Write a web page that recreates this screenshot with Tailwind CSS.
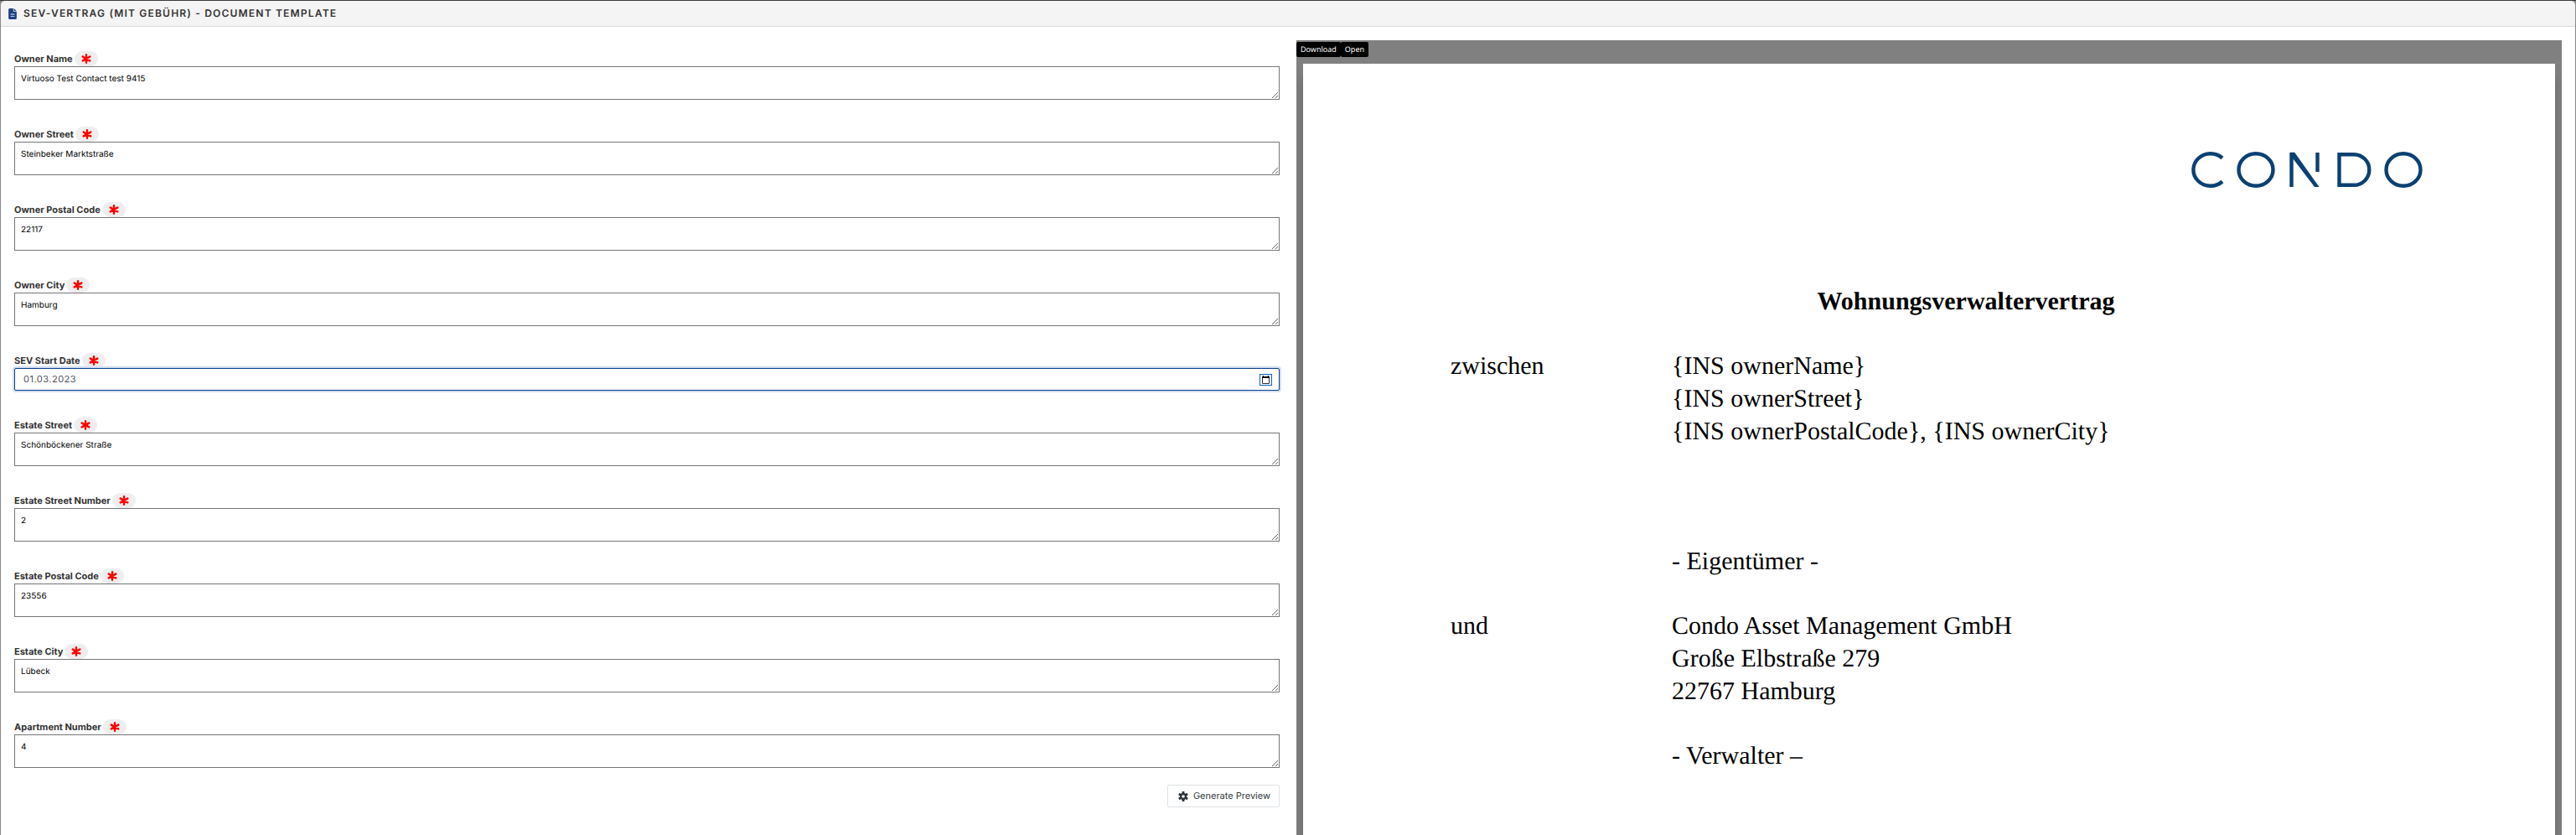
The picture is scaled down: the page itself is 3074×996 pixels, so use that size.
<!DOCTYPE html>
<html lang="en">
<head>
<meta charset="utf-8">
<title>SEV-Vertrag (mit Gebühr) - Document Template</title>
<script src="https://cdn.jsdelivr.net/npm/@tailwindcss/browser@4"></script>
</head>
<body class="bg-[#8a8a8a] font-['Inter',sans-serif] text-[11px] text-[#333] [text-rendering:geometricPrecision]">
<svg class="hidden" aria-hidden="true">
  <symbol id="required" viewBox="0 0 12 12"><path d="M6 1.200v9.600M1.700 3.600l8.600 4.800M10.300 3.600L1.700 8.400" stroke="#f00" stroke-width="2.400" stroke-linecap="round" fill="none"/></symbol>
</svg>
<main class="flex h-screen flex-col overflow-hidden border-t border-[#3a3a3a] px-px">
  <header class="flex h-[31px] shrink-0 items-center gap-2 rounded-t-[5px] border-b border-[#d8d8d8] bg-[#f4f4f4] px-[9px]">
    <svg class="h-[13px] w-[10px]" viewBox="0 0 384 512" aria-hidden="true"><path fill="#1c4186" fill-rule="evenodd" d="M64 0C29 0 0 29 0 64v384c0 35 29 64 64 64h256c35 0 64-29 64-64V160H256c-18 0-32-14-32-32V0zM256 0v128h128zM112 256h160a16 16 0 0 1 0 36H112a16 16 0 0 1 0-36zm0 96h160a16 16 0 0 1 0 36H112a16 16 0 0 1 0-36z"/></svg>
    <h1 class="text-[12px] font-semibold tracking-widest uppercase">SEV-Vertrag (mit Gebühr) - Document Template</h1>
  </header>
  <div class="grid min-h-0 grow grid-cols-2 gap-5 bg-white px-4 pt-4">
    <form class="flex flex-col gap-8 pt-[13px]">
      <div class="flex flex-col">
        <label for="owner-name" class="flex items-center gap-[2px] font-bold">Owner Name <span class="flex h-[18px] w-7 items-center justify-center rounded-full bg-[#eee]"><svg class="size-3"><use href="#required"/></svg></span></label>
        <textarea id="owner-name" class="h-10 resize-y border border-[#767676] bg-white px-[7px] py-[6px] text-[10px] leading-4 text-black [text-rendering:inherit]">Virtuoso Test Contact test 9415</textarea>
      </div>
      <div class="flex flex-col">
        <label for="owner-street" class="flex items-center gap-[2px] font-bold">Owner Street <span class="flex h-[18px] w-7 items-center justify-center rounded-full bg-[#eee]"><svg class="size-3"><use href="#required"/></svg></span></label>
        <textarea id="owner-street" class="h-10 resize-y border border-[#767676] bg-white px-[7px] py-[6px] text-[10px] leading-4 text-black [text-rendering:inherit]">Steinbeker Marktstraße</textarea>
      </div>
      <div class="flex flex-col">
        <label for="owner-postal" class="flex items-center gap-[2px] font-bold">Owner Postal Code <span class="flex h-[18px] w-7 items-center justify-center rounded-full bg-[#eee]"><svg class="size-3"><use href="#required"/></svg></span></label>
        <textarea id="owner-postal" class="h-10 resize-y border border-[#767676] bg-white px-[7px] py-[6px] text-[10px] leading-4 text-black [text-rendering:inherit]">22117</textarea>
      </div>
      <div class="flex flex-col">
        <label for="owner-city" class="flex items-center gap-[2px] font-bold">Owner City <span class="flex h-[18px] w-7 items-center justify-center rounded-full bg-[#eee]"><svg class="size-3"><use href="#required"/></svg></span></label>
        <textarea id="owner-city" class="h-10 resize-y border border-[#767676] bg-white px-[7px] py-[6px] text-[10px] leading-4 text-black [text-rendering:inherit]">Hamburg</textarea>
      </div>
      <div class="flex flex-col">
        <label for="start-date" class="flex items-center gap-[2px] font-bold">SEV Start Date <span class="flex h-[18px] w-7 items-center justify-center rounded-full bg-[#eee]"><svg class="size-3"><use href="#required"/></svg></span></label>
        <div class="flex h-[27px] items-center rounded-[2px] border border-[#0b3f8f] bg-white pr-2 pl-[10px] shadow-[0_0_0_2px_#d3deee]">
          <input id="start-date" type="text" value="01.03.2023" class="min-w-0 grow tracking-[0.5px] text-[#495057] outline-none [text-rendering:inherit]">
          <button type="button" aria-label="Pick a date" class="flex h-[14px] w-[15px] items-center justify-center border border-[#0a5fca]"><svg class="h-[10px] w-[9px]" viewBox="0 0 9 10" aria-hidden="true"><path d="M.5 2.500v7h8v-7" fill="#fff" stroke="#333"/><path d="M0 1h1V0h1v1h5V0h1v1h1v2H0z" fill="#000"/></svg></button>
        </div>
      </div>
      <div class="flex flex-col">
        <label for="estate-street" class="flex items-center gap-[2px] font-bold">Estate Street <span class="flex h-[18px] w-7 items-center justify-center rounded-full bg-[#eee]"><svg class="size-3"><use href="#required"/></svg></span></label>
        <textarea id="estate-street" class="h-10 resize-y border border-[#767676] bg-white px-[7px] py-[6px] text-[10px] leading-4 text-black [text-rendering:inherit]">Schönböckener Straße</textarea>
      </div>
      <div class="flex flex-col">
        <label for="estate-number" class="flex items-center gap-[2px] font-bold">Estate Street Number <span class="flex h-[18px] w-7 items-center justify-center rounded-full bg-[#eee]"><svg class="size-3"><use href="#required"/></svg></span></label>
        <textarea id="estate-number" class="h-10 resize-y border border-[#767676] bg-white px-[7px] py-[6px] text-[10px] leading-4 text-black [text-rendering:inherit]">2</textarea>
      </div>
      <div class="flex flex-col">
        <label for="estate-postal" class="flex items-center gap-[2px] font-bold">Estate Postal Code <span class="flex h-[18px] w-7 items-center justify-center rounded-full bg-[#eee]"><svg class="size-3"><use href="#required"/></svg></span></label>
        <textarea id="estate-postal" class="h-10 resize-y border border-[#767676] bg-white px-[7px] py-[6px] text-[10px] leading-4 text-black [text-rendering:inherit]">23556</textarea>
      </div>
      <div class="flex flex-col">
        <label for="estate-city" class="flex items-center gap-[2px] font-bold">Estate City <span class="flex h-[18px] w-7 items-center justify-center rounded-full bg-[#eee]"><svg class="size-3"><use href="#required"/></svg></span></label>
        <textarea id="estate-city" class="h-10 resize-y border border-[#767676] bg-white px-[7px] py-[6px] text-[10px] leading-4 text-black [text-rendering:inherit]">Lübeck</textarea>
      </div>
      <div class="flex flex-col">
        <label for="apartment" class="flex items-center gap-[2px] font-bold">Apartment Number <span class="flex h-[18px] w-7 items-center justify-center rounded-full bg-[#eee]"><svg class="size-3"><use href="#required"/></svg></span></label>
        <textarea id="apartment" class="h-10 resize-y border border-[#767676] bg-white px-[7px] py-[6px] text-[10px] leading-4 text-black [text-rendering:inherit]">4</textarea>
        <button type="button" class="mt-5 flex h-[27px] items-center gap-[6px] self-end rounded-[2px] border border-[#dee2e6] bg-white pr-[10px] pl-3 text-[#343a40] [text-rendering:inherit]">
          <svg class="size-3" viewBox="0 0 12 12" aria-hidden="true"><g fill="none" stroke="#2f343a"><circle cx="6" cy="6" r="3" stroke-width="2.400"/><path d="M6 0v2.500M6 12V9.500M.8 3l2.200 1.250M11.200 9L9 7.750M11.200 3L9 4.250M.8 9L3 7.750" stroke-width="2.800"/></g></svg>
          Generate Preview
        </button>
      </div>
    </form>
    <section aria-label="Preview" class="flex min-h-0 flex-col overflow-hidden bg-[#808080]">
      <nav class="flex h-7 shrink-0 items-start pt-[2px] font-['Noto_Sans',sans-serif] text-[9px] leading-[18px] text-white">
        <a href="#download" class="rounded-[2px] bg-black px-[5px]">Download</a>
        <a href="#open" class="rounded-[2px] bg-black px-[5px]">Open</a>
      </nav>
      <article class="mx-2 flex grow flex-col bg-white pt-[105px] pr-[88px] pl-[176px] font-['Liberation_Serif',serif] text-[30px] leading-[39px] text-black shadow-[0_16px_12px_rgba(0,0,0,0.2)]">
        <svg class="mr-[70px] h-[43px] w-[276px] self-end" viewBox="0 0 276 43" role="img" aria-label="Condo" fill="none" stroke="#0b4073" stroke-width="4.400">
          <path d="M37 7.500A20.500 19.300 0 1 0 37 35.500"/>
          <ellipse cx="77" cy="21.500" rx="20.500" ry="19.300"/>
          <path d="M119.500 42V1M150.500 1v23"/>
          <path fill="#0b4073" stroke="none" d="M118 .7h5.200L152.500 42h-5.500L118 4z"/>
          <path d="M176.500 3.200H194a18.300 18.300 0 0 1 0 36.600h-17.500z"/>
          <ellipse cx="253" cy="21.500" rx="20.500" ry="19.300"/>
        </svg>
        <h2 class="mt-[116px] text-center font-bold">Wohnungsverwaltervertrag</h2>
        <div class="mt-[38px] flex"><p class="w-[264px] shrink-0">zwischen</p><p>{INS ownerName}<br>{INS ownerStreet}<br>{INS ownerPostalCode}, {INS ownerCity}</p></div>
        <p class="mt-[116px] ml-[264px]">- Eigentümer -</p>
        <div class="mt-[38px] flex"><p class="w-[264px] shrink-0">und</p><p>Condo Asset Management GmbH<br>Große Elbstraße 279<br>22767 Hamburg</p></div>
        <p class="mt-[38px] ml-[264px]">- Verwalter –</p>
      </article>
    </section>
  </div>
</main>
</body>
</html>
